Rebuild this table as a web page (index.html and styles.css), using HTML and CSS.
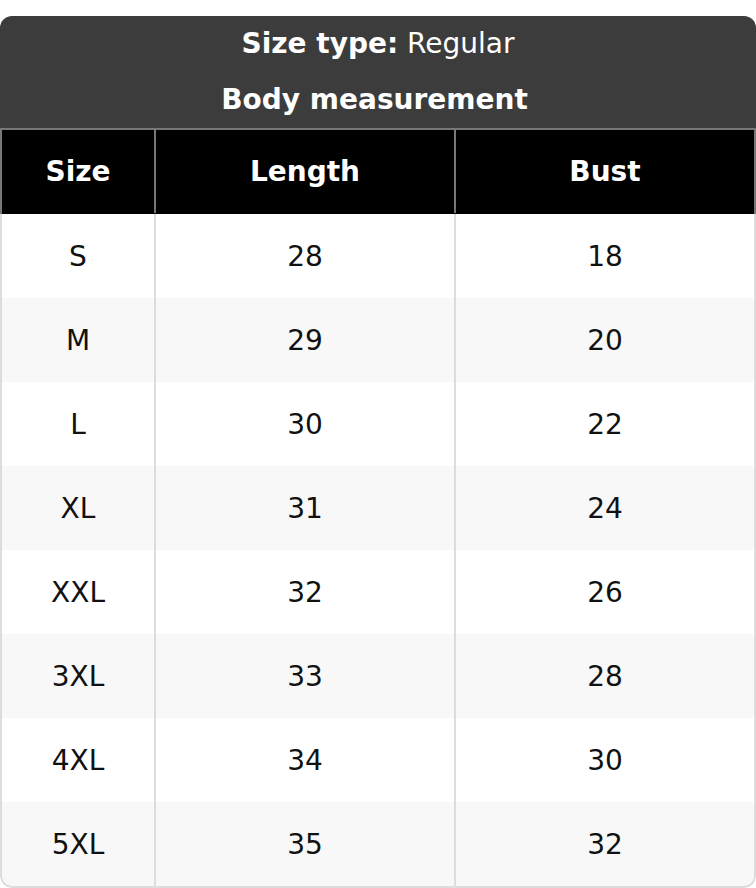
FILE: index.html
```html
<!DOCTYPE html>
<html>
<head>
<meta charset="utf-8">
<link rel="stylesheet" href="styles.css">
</head>
<body>
<div class="card">
  <div class="title">
    <div class="title-line"><b>Size type:</b> Regular</div>
    <div class="title-line second"><b>Body measurement</b></div>
  </div>
  <div class="row head">
    <div class="cell">Size</div>
    <div class="cell">Length</div>
    <div class="cell">Bust</div>
  </div>
  <div class="row"><div class="cell">S</div><div class="cell">28</div><div class="cell">18</div></div>
  <div class="row alt"><div class="cell">M</div><div class="cell">29</div><div class="cell">20</div></div>
  <div class="row"><div class="cell">L</div><div class="cell">30</div><div class="cell">22</div></div>
  <div class="row alt"><div class="cell">XL</div><div class="cell">31</div><div class="cell">24</div></div>
  <div class="row"><div class="cell">XXL</div><div class="cell">32</div><div class="cell">26</div></div>
  <div class="row alt"><div class="cell">3XL</div><div class="cell">33</div><div class="cell">28</div></div>
  <div class="row"><div class="cell">4XL</div><div class="cell">34</div><div class="cell">30</div></div>
  <div class="row alt last"><div class="cell">5XL</div><div class="cell">35</div><div class="cell">32</div></div>
</div>
</body>
</html>
```
FILE: styles.css
```css
html, body {
  margin: 0;
  padding: 0;
  background: #ffffff;
}
body {
  padding-top: 16px;
  font-family: "DejaVu Sans", sans-serif;
  font-size: 28px;
  color: #111111;
}
.card {
  width: 756px;
  border-radius: 12px;
  overflow: hidden;
  background: #ffffff;
}
.title {
  background: #3c3c3c;
  color: #ffffff;
  text-align: center;
}
.title-line {
  height: 56px;
  line-height: 56px;
}
.title-line.second {
  padding-right: 7px;
}
.row {
  display: grid;
  grid-template-columns: 154px 300px 298px;
  height: 84px;
  border-left: 2px solid #dddddd;
  border-right: 2px solid #dddddd;
  box-sizing: border-box;
}
.row .cell {
  display: flex;
  align-items: center;
  justify-content: center;
  border-right: 2px solid #dddddd;
}
.row .cell:last-child {
  border-right: 0;
}
.alt {
  background: #f8f8f8;
}
.last {
  height: 86px;
  border-bottom: 2px solid #dddddd;
  border-radius: 0 0 12px 12px;
}
.head {
  background: #000000;
  color: #ffffff;
  font-weight: bold;
  height: 86px;
  padding-bottom: 1px;
  border-top: 2px solid #777777;
  border-left-color: #777777;
  border-right-color: #777777;
}
.head .cell {
  border-right-color: #777777;
}
```
